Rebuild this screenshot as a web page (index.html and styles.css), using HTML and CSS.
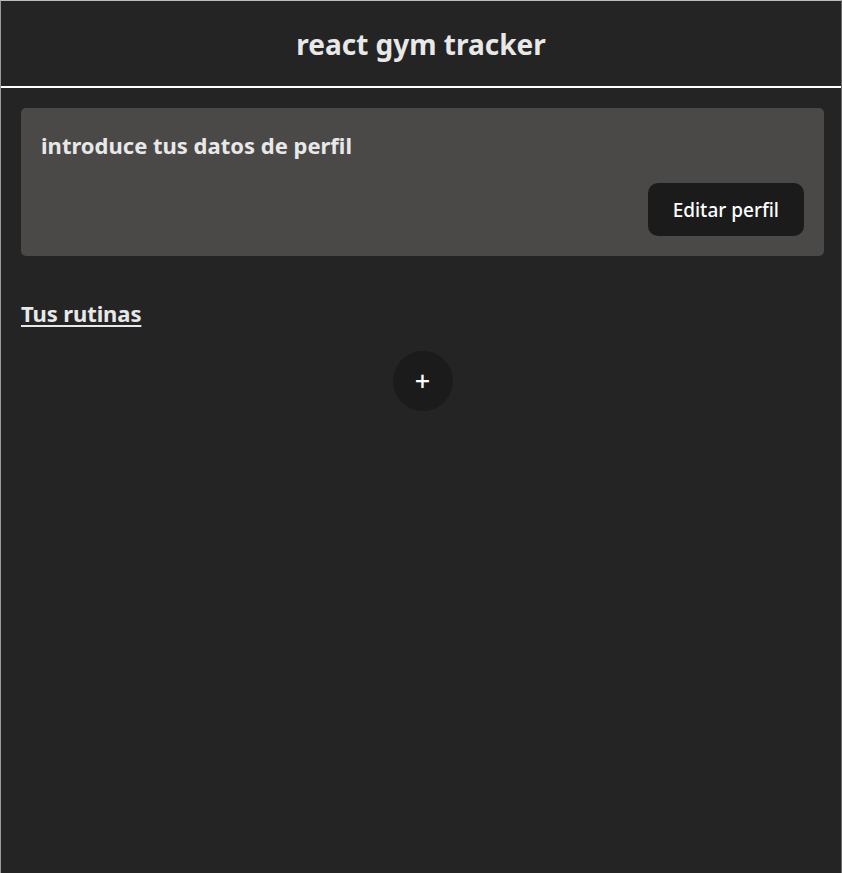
FILE: index.html
```html
<!DOCTYPE html>
<html lang="es">
<head>
<meta charset="utf-8">
<title>react gym tracker</title>
<link rel="stylesheet" href="styles.css">
</head>
<body>
<div class="app">
  <header class="header">
    <h1 class="title">react gym tracker</h1>
  </header>
  <main class="main">
    <section class="card">
      <h2 class="card-title">introduce tus datos de perfil</h2>
      <div class="card-actions">
        <button class="btn">Editar perfil</button>
      </div>
    </section>
    <h2 class="section-title">Tus rutinas</h2>
    <div class="add-row">
      <button class="add-btn">+</button>
    </div>
  </main>
</div>
</body>
</html>
```

FILE: styles.css
```css
* { box-sizing: border-box; }
html, body { margin: 0; padding: 0; height: 100%; }
body {
  background: #242424;
  font-family: "Noto Sans", "Open Sans", sans-serif;
  color: #e6e6e6;
}
.app {
  min-height: 100%;
  border-top: 1px solid #bdbdbd;
  border-left: 1px solid #9a9a9a;
  border-right: 1px solid #6a6a6a;
  background: #242424;
}
.header {
  height: 87px;
  border-bottom: 2px solid #ffffff;
  display: flex;
  align-items: center;
  justify-content: center;
}
.title {
  margin: 0;
  font-size: 28px;
  font-weight: 700;
  color: #e8e8e8;
  padding-bottom: 0;
}
.main {
  padding: 20px 17px 0 20px;
}
.card {
  background: #4a4948;
  border-radius: 5px;
  padding: 22px 20px 20px 20px;
}
.card-title {
  margin: 0;
  font-size: 22px;
  font-weight: 700;
  line-height: 30px;
  color: #e8e8e8;
}
.card-actions {
  display: flex;
  justify-content: flex-end;
  margin-top: 23px;
}
.btn {
  background: #1b1b1b;
  color: #ffffff;
  border: none;
  border-radius: 10px;
  height: 53px;
  padding: 0 25px;
  font-family: inherit;
  font-size: 19px;
  font-weight: 500;
}
.section-title {
  margin: 43px 0 0 0;
  font-size: 22px;
  font-weight: 700;
  line-height: 28px;
  letter-spacing: -0.1px;
  text-decoration: underline;
  text-underline-offset: 3px;
  color: #e8e8e8;
}
.add-row {
  display: flex;
  justify-content: center;
  margin-top: 24px;
}
.add-btn {
  width: 60px;
  height: 60px;
  border-radius: 50%;
  background: #1b1b1b;
  border: none;
  color: #ffffff;
  font-family: inherit;
  font-size: 27px;
  font-weight: 500;
  line-height: 1;
  padding: 0 0 2px 0;
}
```
